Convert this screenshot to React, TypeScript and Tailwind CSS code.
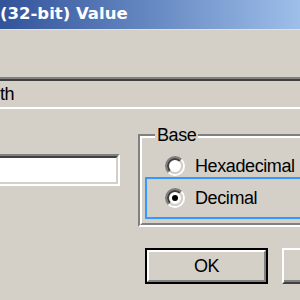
import React from "react";

function Radio({ checked }: { checked?: boolean }) {
  const c = 10;
  const a1 = 9 / Math.SQRT2;
  const a2 = 7 / Math.SQRT2;
  return (
    <svg width="20" height="20" viewBox="0 0 20 20" className="shrink-0">
      <circle cx={c} cy={c} r={7} fill="#ffffff" />
      <path d={`M ${c - a1} ${c + a1} A 9 9 0 0 1 ${c + a1} ${c - a1}`} stroke="#808080" strokeWidth="2" fill="none" />
      <path d={`M ${c + a1} ${c - a1} A 9 9 0 0 1 ${c - a1} ${c + a1}`} stroke="#ffffff" strokeWidth="2" fill="none" />
      <path d={`M ${c - a2} ${c + a2} A 7 7 0 0 1 ${c + a2} ${c - a2}`} stroke="#404040" strokeWidth="2" fill="none" />
      <path d={`M ${c + a2} ${c - a2} A 7 7 0 0 1 ${c - a2} ${c + a2}`} stroke="#d4d0c8" strokeWidth="2" fill="none" />
      {checked && <circle cx={c} cy={c} r={3} fill="#000000" />}
    </svg>
  );
}

export default function App() {
  return (
    <div
      className="w-[300px] h-[300px] overflow-hidden bg-[#d4d0c8] text-black text-[18px] tracking-[-0.4px]"
      style={{ fontFamily: '"Liberation Sans", Arial, sans-serif' }}
    >
      <div
        className="h-[29px] flex items-center bg-gradient-to-r from-[#33539a] to-[#9ebfe9] text-white font-bold text-[16.5px] tracking-normal whitespace-nowrap"
        style={{ fontFamily: '"DejaVu Sans", Verdana, sans-serif' }}
      >
        (32-bit) Value
      </div>
      <div className="h-px bg-[#e4e1dc]" />
      <div className="mt-[47px] w-[320px] h-[32px] border-t-2 border-b-2 border-t-[#808080] border-b-white">
        <div className="h-full border-t-2 border-t-[#404040] flex items-center leading-none whitespace-nowrap">
          th
        </div>
      </div>
      <div className="flex items-start">
        <div className="mt-[45px] w-[120px] h-[32px] shrink-0 border-t-2 border-r-2 border-b-2 border-t-[#808080] border-r-white border-b-white">
          <div className="h-full bg-white border-t-2 border-r-2 border-b-2 border-t-[#404040] border-r-[#d4d0c8] border-b-[#d4d0c8]" />
        </div>
        <div className="relative ml-[18px] mt-[25px] w-[200px] h-[93px] shrink-0 border-t-2 border-l-2 border-r-2 border-b-2 border-t-[#808080] border-l-[#808080] border-r-white border-b-white">
          <div className="h-full border-t-2 border-l-2 border-r-2 border-b-2 border-t-white border-l-white border-r-[#808080] border-b-[#808080]">
            <div className="flex items-center gap-[10px] ml-[23px] mt-[18px] h-[20px] whitespace-nowrap">
              <Radio />
              <span>Hexadecimal</span>
            </div>
            <div className="ml-[3px] mt-[1px] h-[42px] border-2 border-[#3399ff] flex items-center gap-[10px] pl-[18px] whitespace-nowrap">
              <Radio checked />
              <span>Decimal</span>
            </div>
          </div>
          <div className="absolute left-[15px] top-[-9px] bg-[#d4d0c8] px-[2px] leading-[16px] whitespace-nowrap">
            Base
          </div>
        </div>
      </div>
      <div className="flex mt-[21px] ml-[145px]">
        <div className="w-[123px] h-[36px] shrink-0 border-2 border-black">
          <div className="h-full border-t-2 border-l-2 border-r-2 border-b-2 border-t-white border-l-white border-r-[#808080] border-b-[#808080] flex items-center justify-center">
            OK
          </div>
        </div>
        <div className="ml-[14px] w-[123px] h-[36px] shrink-0 border-t-2 border-l-2 border-r-2 border-b-2 border-t-white border-l-white border-r-[#404040] border-b-[#404040]">
          <div className="h-full border-r-2 border-b-2 border-r-[#808080] border-b-[#808080]" />
        </div>
      </div>
    </div>
  );
}
